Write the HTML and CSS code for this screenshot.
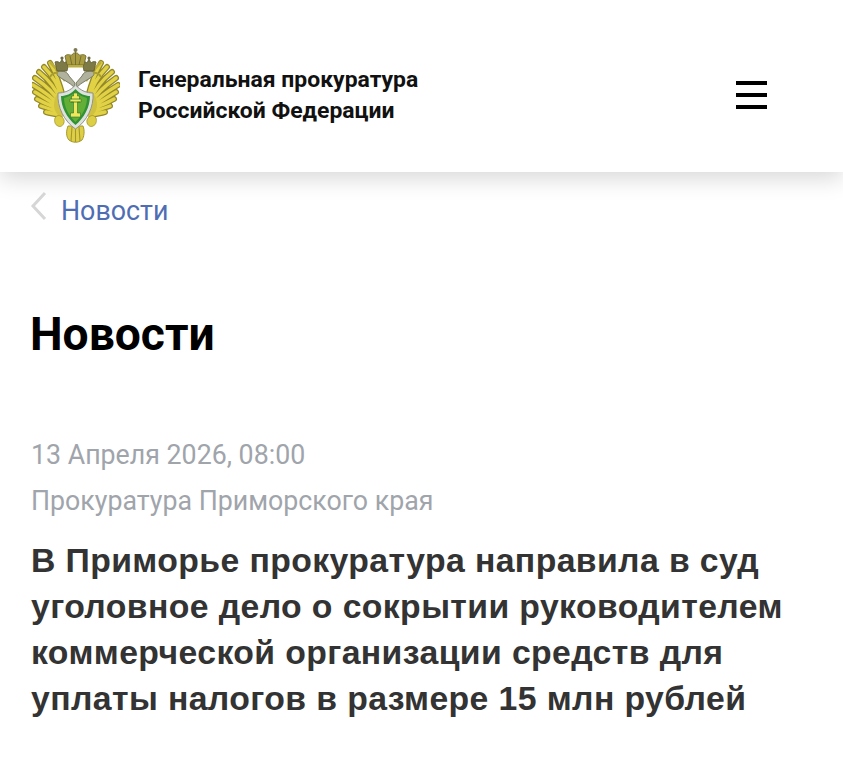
FILE: index.html
```html
<!DOCTYPE html>
<html lang="ru">
<head>
	<meta charset="UTF-8">
	<title>Новости</title>
	<link rel="stylesheet" href="styles.css">
</head>
<body>
	<header class="header">
		<svg class="logo" viewBox="0 0 88 96" width="88" height="96">
			<defs>
				<path id="feathers" d="M31 50 C28 38 24 26 18 16 M30 52 C27 40 20 28 12 20 M29 54 C25 44 17 33 7 25 M28 56 C23 47 13 38 3 31 M27 58 C21 51 11 44 1 38 M26 60 C20 55 11 50 3 45 M26 62 C20 59 12 56 5 52 M26 65 C21 63 15 61 9 59 M27 68 C23 67 18 66 14 65"/>
				<g id="wing">
					<use href="#feathers" fill="none" stroke="#94882a" stroke-width="6" stroke-linecap="round"/>
					<use href="#feathers" fill="none" stroke="#e0d244" stroke-width="3.4" stroke-linecap="round"/>
					<path d="M31 44 C26 44 22 50 22 58 C22 64 26 70 31 70 Z" fill="#d0c23e"/>
					<!-- upper edge of the wing -->
					<path d="M33 34 C28 27 24 21 18 15" fill="none" stroke="#bcae38" stroke-width="2.5"/>
					<!-- neck and head -->
					<path d="M42 40 C37 35 31 33 26 29 C24 27 25 24 29 24 C33 24 36 26 37 29 L43 36 Z" fill="#b0b29e" stroke="#7a7c62" stroke-width="1"/>
					<path d="M26 26 C22 25 20 27 18 30" fill="none" stroke="#a89c34" stroke-width="2"/>
					<!-- side crown -->
					<path d="M25 24 L23 15 C25 14 27 15 28 16 L30 12 L32 16 C33 15 35 14 37 15 L35 24 Z" fill="#7e7a45" stroke="#5c5933" stroke-width="0.8"/>
					<circle cx="30" cy="11" r="1.6" fill="#6c6a45"/>
					<!-- claw -->
					<path d="M23 71 C25 67 30 68 32 73 C33 77 29 81 26 79 C23 78 22 74 23 71 Z" fill="#dccf45" stroke="#a4962a" stroke-width="0.8"/>
				</g>
			</defs>
			<use href="#wing"/>
			<use href="#wing" transform="matrix(-1 0 0 1 87 0)"/>
			<!-- big crown -->
			<path d="M35 18 L33 9 C36 6 39 9 40 8 C41 5 46 5 47 8 C48 9 51 6 54 9 L52 18 Z" fill="#a99c40" stroke="#716a2d" stroke-width="0.9"/>
			<path d="M43.5 4 V18 M38 9 L40 18 M49 9 L47 18" fill="none" stroke="#6f6a34" stroke-width="0.9"/>
			<circle cx="43.5" cy="3" r="2" fill="#7d7a50"/>
			<rect x="36" y="18" width="15" height="2.5" fill="#b9ac42"/>
			<!-- tail -->
			<path d="M36 79 L51 79 C53 84 52 90 50 93 C46 96 41 96 37 93 C34 90 34 84 36 79 Z" fill="#ddd047" stroke="#a4962a" stroke-width="1"/>
			<path d="M40 80 L39 94 M43.5 80 V95 M47 80 L48 94" fill="none" stroke="#a4962a" stroke-width="1.1"/>
			<!-- shield -->
			<path d="M43.5 38 C49 44 55 46 61 46 C62 60 55 74 43.5 82 C32 74 25 60 26 46 C32 46 38 44 43.5 38 Z" fill="#dfe2dc" stroke="#8e948c" stroke-width="1"/>
			<path d="M43.5 42 C48 47 53 49 58 49 C58 60 52 71 43.5 78 C35 71 29 60 29 49 C34 49 39 47 43.5 42 Z" fill="#2f9333"/>
			<path d="M43.5 45 C47 48 51 50 55 51 C55 60 50 69 43.5 75 C37 69 32 60 32 51 C36 50 40 48 43.5 45 Z" fill="#62ae36"/>
			<!-- pillar -->
			<path d="M41.5 46 h4 v3 h2 v3 h1.5 v3 h-3.5 v11 h3 v4 h-10 v-4 h3 v-11 h-3.5 v-3 h1.5 v-3 h2 z" fill="#f2e75c" stroke="#2b6f2e" stroke-width="0.6"/>
			<path d="M39 52 h9 M39 55 h9" stroke="#2f7d35" stroke-width="0.8" fill="none"/>
		</svg>
		<div class="org-name">Генеральная прокуратура<br>Российской Федерации</div>
		<div class="burger"><span></span><span></span><span></span></div>
	</header>

	<main class="content">
		<nav class="back">
			<svg class="back-arrow" viewBox="0 0 18 30" width="18" height="30">
				<path d="M15 2 L3 15 L15 28" fill="none" stroke="#d6d6d6" stroke-width="3"/>
			</svg>
			<a class="back-link" href="#">Новости</a>
		</nav>

		<h1 class="page-title">Новости</h1>

		<div class="meta meta-date">13 Апреля 2026, 08:00</div>
		<div class="meta meta-source">Прокуратура Приморского края</div>
		<h2 class="news-title">В Приморье прокуратура направила в суд уголовное дело о сокрытии руководителем коммерческой организации средств для уплаты налогов в размере 15 млн рублей</h2>
	</main>
</body>
</html>
```
FILE: styles.css
```css
html, body {
	margin: 0;
	height: 768px;
	overflow: hidden;
	background-color: #fff;
	font-family: Roboto, "Noto Sans", sans-serif;
}

/********** header **********/
.header {
	display: flex;
	align-items: center;
	height: 172px;
	padding: 18px 76px 0 32px;
	box-sizing: border-box;
	background-color: #fff;
	box-shadow: 0 6px 22px rgba(0, 0, 0, 0.16);
}
.logo {
	flex: none;
	margin-right: 18px;
	filter: blur(0.5px);
}
.org-name {
	flex: 1;
	font-size: 22.95px;
	font-weight: 700;
	line-height: 31px;
	color: #111;
}
.burger {
	display: flex;
	flex-direction: column;
	gap: 8px;
	width: 31px;
}
.burger span {
	height: 4px;
	background-color: #000;
}

/********** content **********/
.content {
	padding: 0 31px;
}
.back {
	display: flex;
	align-items: center;
	height: 78px;
}
.back-arrow {
	margin-right: 13px;
	margin-top: -10px;
	margin-left: -1px;
}
.back-link {
	font-size: 26.8px;
	color: #4f6db3;
	text-decoration: none;
}
.page-title {
	margin: 57px 0 0 -1px;
	font-size: 46.2px;
	font-weight: 700;
	line-height: 54px;
	color: #000;
}
.meta {
	font-size: 26.75px;
	line-height: 46px;
	color: #a0a4ab;
}
.meta-date {
	margin-top: 71px;
}
.news-title {
	margin: 13px 0 0;
	font-family: "Liberation Sans", Arial, sans-serif;
	font-size: 33.75px;
	font-weight: 700;
	line-height: 46px;
	letter-spacing: 0.4px;
	color: #333;
}
```
